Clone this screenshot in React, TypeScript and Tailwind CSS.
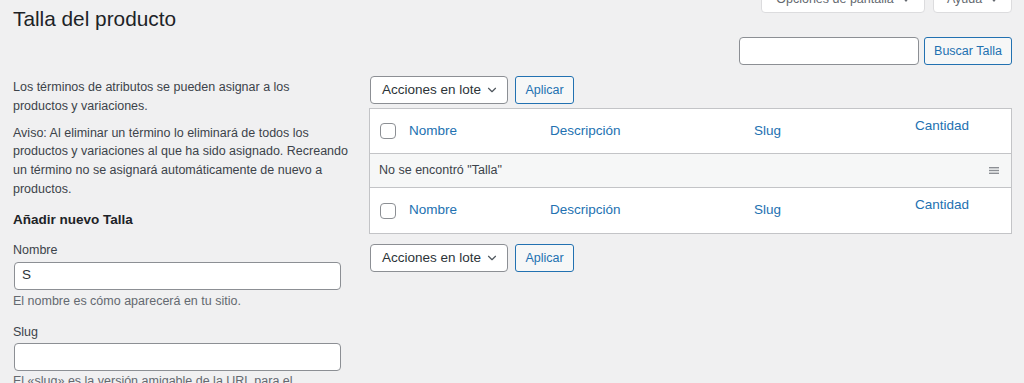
import { ChevronDown } from 'lucide-react'

const columns = ['Nombre', 'Descripción', 'Slug']

function Caret() {
  return (
    <svg width="8" height="5" viewBox="0 0 8 5" className="ml-[8px]">
      <path d="M0 0h8L4 5z" fill="#646970" />
    </svg>
  )
}

function BulkActions() {
  return (
    <div className="flex items-center gap-[7px] h-[28px]">
      <div className="ml-[1px] w-[138px] h-[28px] bg-white border border-[#8c8f94] rounded-[4px] flex items-center justify-between pl-[11px] pr-[8px] text-[13.5px] text-[#2c3338]">
        <span>Acciones en lote</span>
        <ChevronDown size={14} strokeWidth={2} className="text-[#50575e]" />
      </div>
      <button className="w-[59px] h-[28px] bg-[#f6f7f7] border border-[#2271b1] rounded-[3px] text-[12.5px] text-[#2271b1]">
        Aplicar
      </button>
    </div>
  )
}

function Checkbox() {
  return <div className="w-[16px] h-[16px] bg-white border border-[#8c8f94] rounded-[4px]"></div>
}

function HeaderRow({ bordered }: { bordered: boolean }) {
  return (
    <div
      className={`grid grid-cols-[30px_141px_204px_161px_1fr] h-[45px] items-center text-[13.5px] text-[#2271b1] ${
        bordered ? 'border-b border-[#c3c4c7]' : ''
      }`}
    >
      <div className="pl-[10px]">
        <Checkbox />
      </div>
      {columns.map((col) => (
        <div key={col} className="pl-[9px]">
          {col}
        </div>
      ))}
      <div className="pl-[9px] self-start pt-[7px] leading-[19px]">Cantidad</div>
    </div>
  )
}

export default function App() {
  return (
    <div className="h-[383px] overflow-hidden bg-[#f0f0f1] font-['Liberation_Sans',Arial,sans-serif] text-[#3c434a] pl-[13px] pr-[12px]">
      <div className="flex justify-between items-start">
        <h1 className="pt-[4px] text-[20.8px] leading-[30px] text-[#1d2327] font-normal">Talla del producto</h1>
        <div className="flex gap-[8px] -mt-[15px]">
          <div className="w-[164px] h-[28px] bg-white border border-[#dcdcde] rounded-b-[4px] flex items-center justify-center text-[12.5px] text-[#646970]">
            Opciones de pantalla
            <Caret />
          </div>
          <div className="w-[79px] h-[28px] bg-white border border-[#dcdcde] rounded-b-[4px] flex items-center justify-center text-[12.5px] text-[#646970]">
            Ayuda
            <Caret />
          </div>
        </div>
      </div>

      <div className="flex justify-end gap-[5px] mt-[3px]">
        <div className="w-[180px] h-[28px] bg-white border border-[#8c8f94] rounded-[4px]"></div>
        <button className="w-[88px] h-[28px] bg-[#f6f7f7] border border-[#2271b1] rounded-[3px] text-[12.5px] text-[#2271b1]">
          Buscar Talla
        </button>
      </div>

      <div className="flex gap-[21px] mt-[11px]">
        <div className="w-[335px] shrink-0 text-[12.5px] leading-[18.8px]">
          <p className="mt-[2px]">
            Los términos de atributos se pueden asignar a los
            <br />
            productos y variaciones.
          </p>
          <p className="mt-[8px]">
            Aviso: Al eliminar un término lo eliminará de todos los productos y variaciones al que ha sido
            asignado. Recreando un término no se asignará automáticamente de nuevo a productos.
          </p>
          <h2 className="mt-[11px] text-[13.5px] leading-[19px] font-bold text-[#1d2327]">Añadir nuevo Talla</h2>

          <label className="block mt-[12px] leading-[19px]">Nombre</label>
          <div className="mt-[2px] ml-[1px] w-[327px] h-[28px] bg-white border border-[#8c8f94] rounded-[4px] flex items-center pl-[7px] text-[13.5px] text-[#2c3338]">
            S
          </div>
          <p className="mt-[2px] leading-[19px] text-[#646970]">El nombre es cómo aparecerá en tu sitio.</p>

          <label className="block mt-[12px] leading-[19px]">Slug</label>
          <div className="mt-[1px] ml-[1px] w-[327px] h-[28px] bg-white border border-[#8c8f94] rounded-[4px]"></div>
          <p className="mt-[1px] leading-[19px] text-[#646970]">
            El «slug» es la versión amigable de la URL para el
            <br />
            nombre. Suele estar en minúsculas.
          </p>
        </div>

        <div className="flex-1">
          <BulkActions />
          <div className="mt-[4px] bg-white border border-[#c3c4c7]">
            <HeaderRow bordered />
            <div className="h-[34px] bg-[#f6f7f7] border-b border-[#c3c4c7] flex items-center justify-between pl-[9px] pr-[12px] text-[12.5px]">
              <span>No se encontró "Talla"</span>
              <svg width="10" height="7" viewBox="0 0 10 7">
                <rect y="0" width="10" height="1.4" fill="#8c8f94" />
                <rect y="2.8" width="10" height="1.4" fill="#8c8f94" />
                <rect y="5.6" width="10" height="1.4" fill="#8c8f94" />
              </svg>
            </div>
            <HeaderRow bordered={false} />
          </div>
          <div className="mt-[10px]">
            <BulkActions />
          </div>
        </div>
      </div>
    </div>
  )
}
